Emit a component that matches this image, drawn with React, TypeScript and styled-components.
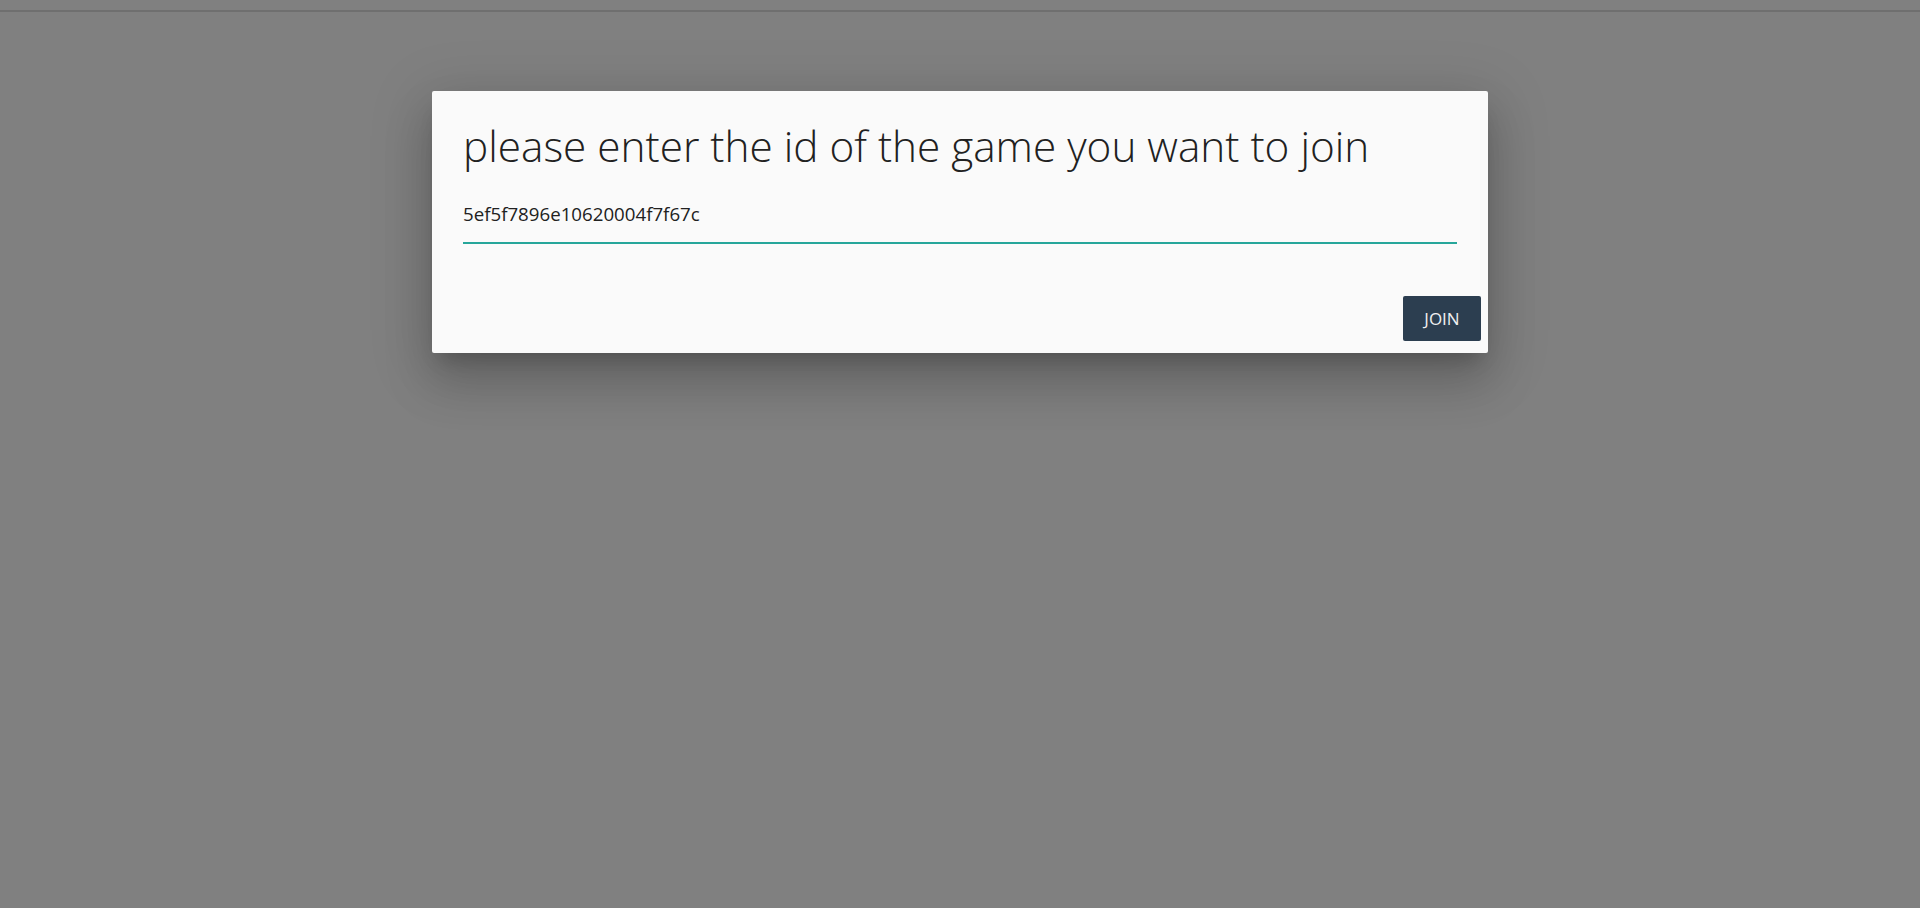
import React from "react";
import styled, { createGlobalStyle } from "styled-components";

const Global = createGlobalStyle`
  html, body { margin: 0; padding: 0; }
  body {
    background: #808080;
    font-family: "Open Sans", "Noto Sans", sans-serif;
    min-height: 908px;
  }
`;

const Page = styled.div`
  display: flex;
  flex-direction: column;
  align-items: center;
  min-height: 908px;
`;

const TopRule = styled.div`
  align-self: stretch;
  height: 10px;
  border-bottom: 2px solid #6f6f6f;
`;

const Modal = styled.div`
  margin-top: 79px;
  width: 1056px;
  box-sizing: border-box;
  background: #fafafa;
  border-radius: 2px;
  box-shadow: 0 30px 48px 4px rgba(0, 0, 0, 0.14),
    0 11px 58px 10px rgba(0, 0, 0, 0.12), 0 14px 19px -9px rgba(0, 0, 0, 0.2);
  display: flex;
  flex-direction: column;
`;

const Content = styled.div`
  padding: 30px 31px 0 31px;
  display: flex;
  flex-direction: column;
`;

const Title = styled.h4`
  margin: 0;
  font-family: "Open Sans", sans-serif;
  font-weight: 340;
  font-size: 42.3px;
  line-height: 50px;
  color: #212121;
  letter-spacing: 0;
`;

const Field = styled.div`
  margin-top: 12px;
`;

const Input = styled.input`
  display: block;
  width: 100%;
  box-sizing: border-box;
  height: 60px;
  padding: 2px 0 0 0;
  margin: 0;
  border: none;
  border-bottom: 1px solid #26a69a;
  box-shadow: 0 1px 0 0 #26a69a;
  background: transparent;
  outline: none;
  font-family: "Open Sans", sans-serif;
  font-size: 18.7px;
  color: #212121;
`;

const Footer = styled.div`
  display: flex;
  justify-content: flex-end;
  padding: 53px 7px 12px 7px;
`;

const Button = styled.button`
  width: 78px;
  height: 45px;
  border: none;
  border-radius: 2px;
  background: #2c3e50;
  color: #f0f0f0;
  font-family: "Open Sans", sans-serif;
  font-size: 17px;
  text-transform: uppercase;
  padding: 0;
  cursor: pointer;
`;

export default function App() {
  return (
    <>
      <Global />
      <Page>
        <TopRule />
        <Modal>
          <Content>
            <Title>please enter the id of the game you want to join</Title>
            <Field>
              <Input defaultValue="5ef5f7896e10620004f7f67c" />
            </Field>
          </Content>
          <Footer>
            <Button>join</Button>
          </Footer>
        </Modal>
      </Page>
    </>
  );
}
